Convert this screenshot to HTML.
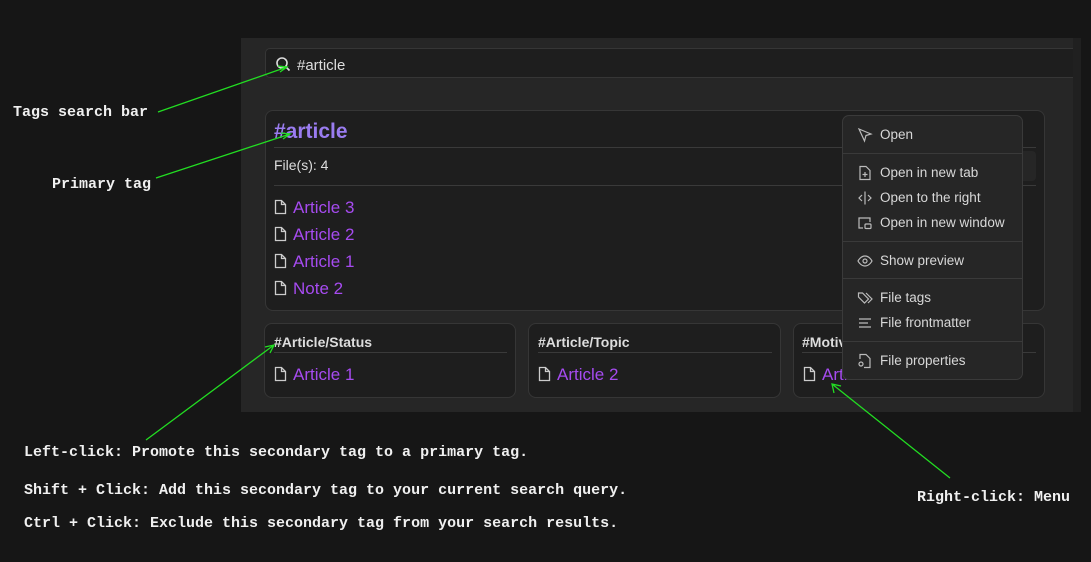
<!DOCTYPE html>
<html><head><style>
body{margin:0;width:1091px;height:562px;background:#161616;position:relative;overflow:hidden;font-family:"Liberation Sans",sans-serif}
.abs{position:absolute}
.panel{left:241px;top:38px;width:832px;height:374px;background:#262626}
.search{left:265px;top:48px;width:808px;height:30px;background:#1e1e1e;border:1px solid #363636;border-right:none;border-radius:5px 0 0 5px;box-sizing:border-box}
.card{background:#1e1e1e;border:1px solid #363636;border-radius:8px;box-sizing:border-box}
.mono{font-family:"Liberation Mono","DejaVu Sans Mono",monospace;font-weight:bold;color:#f0f0f0;font-size:15px;white-space:nowrap}
.link{color:#a64bf0;font-size:17px}
.fi{display:inline-block;vertical-align:-2px;margin-right:6px}
.rows div{height:27px;line-height:27px}
.menu{left:842px;top:115px;width:181px;height:265px;background:#262626;border:1px solid #3a3a3a;border-radius:7px;box-sizing:border-box}
.mi{position:absolute;left:14px;font-size:13.5px;color:#d8d8d8;white-space:nowrap}
.mi svg{position:absolute;left:0;top:0}
.mi span{position:absolute;left:23px;top:0px}
.sep{position:absolute;left:0;right:0;height:1px;background:#3a3a3a}
</style></head><body>
<div class="abs panel"></div>
<div class="abs" style="left:1073px;top:38px;width:8px;height:374px;background:#202020"></div>
<div class="abs search">
<svg class="abs" style="left:9px;top:7px" width="16" height="16" viewBox="0 0 16 16" fill="none" stroke="#ddd" stroke-width="1.6"><circle cx="7" cy="7" r="5"/><path d="M11 11l3.5 3.5"/></svg>
<div class="abs" style="left:31px;top:8px;color:#ddd;font-size:15px">#article</div>
</div>
<div class="abs card" style="left:265px;top:110px;width:780px;height:201px">
<div class="abs" style="left:8px;top:9px;font-size:21px;font-weight:bold;color:#9a7cf0">#article</div>
<div class="abs" style="left:8px;right:8px;top:36px;height:1px;background:#3a3a3a"></div>
<div class="abs" style="left:8px;top:46px;font-size:14px;color:#ddd">File(s): 4</div>
<div class="abs" style="left:8px;right:8px;top:74px;height:1px;background:#3a3a3a"></div>
<div class="abs rows" style="left:8px;top:83px">
<div><svg class="fi" width="13" height="16" viewBox="0 0 13 16" fill="none" stroke="#ccc" stroke-width="1.3"><path d="M1.5 1.5h6l4 4v9h-10z M7.5 1.5v4h4"/></svg><span class="link">Article 3</span></div>
<div><svg class="fi" width="13" height="16" viewBox="0 0 13 16" fill="none" stroke="#ccc" stroke-width="1.3"><path d="M1.5 1.5h6l4 4v9h-10z M7.5 1.5v4h4"/></svg><span class="link">Article 2</span></div>
<div><svg class="fi" width="13" height="16" viewBox="0 0 13 16" fill="none" stroke="#ccc" stroke-width="1.3"><path d="M1.5 1.5h6l4 4v9h-10z M7.5 1.5v4h4"/></svg><span class="link">Article 1</span></div>
<div><svg class="fi" width="13" height="16" viewBox="0 0 13 16" fill="none" stroke="#ccc" stroke-width="1.3"><path d="M1.5 1.5h6l4 4v9h-10z M7.5 1.5v4h4"/></svg><span class="link">Note 2</span></div>
</div>
<div class="abs" style="left:740px;top:40px;width:30px;height:30px;background:#262626;border-radius:4px"></div>
</div>
<div class="abs card" style="left:264px;top:323px;width:252px;height:75px">
<div class="abs" style="left:9px;top:10px;font-size:14px;font-weight:bold;color:#ddd">#Article/Status</div>
<div class="abs" style="left:9px;right:8px;top:28px;height:1px;background:#3a3a3a"></div>
<div class="abs" style="left:9px;top:41px"><svg class="fi" width="13" height="16" viewBox="0 0 13 16" fill="none" stroke="#ccc" stroke-width="1.3"><path d="M1.5 1.5h6l4 4v9h-10z M7.5 1.5v4h4"/></svg><span class="link">Article 1</span></div>
</div>
<div class="abs card" style="left:528px;top:323px;width:253px;height:75px">
<div class="abs" style="left:9px;top:10px;font-size:14px;font-weight:bold;color:#ddd">#Article/Topic</div>
<div class="abs" style="left:9px;right:8px;top:28px;height:1px;background:#3a3a3a"></div>
<div class="abs" style="left:9px;top:41px"><svg class="fi" width="13" height="16" viewBox="0 0 13 16" fill="none" stroke="#ccc" stroke-width="1.3"><path d="M1.5 1.5h6l4 4v9h-10z M7.5 1.5v4h4"/></svg><span class="link">Article 2</span></div>
</div>
<div class="abs card" style="left:793px;top:323px;width:252px;height:75px">
<div class="abs" style="left:8px;top:10px;font-size:14px;font-weight:bold;color:#ddd">#Motivation</div>
<div class="abs" style="left:8px;right:8px;top:28px;height:1px;background:#3a3a3a"></div>
<div class="abs" style="left:9px;top:41px"><svg class="fi" width="13" height="16" viewBox="0 0 13 16" fill="none" stroke="#ccc" stroke-width="1.3"><path d="M1.5 1.5h6l4 4v9h-10z M7.5 1.5v4h4"/></svg><span class="link">Article 3</span></div>
</div>
<div class="abs menu">
<div class="mi" style="top:11px"><svg width="16" height="16" viewBox="0 0 16 16" fill="none" stroke="#bbb" stroke-width="1.2"><path d="M2 2l12 5-5 1.5L7.5 14z"/></svg><span>Open</span></div>
<div class="sep" style="top:37px"></div>
<div class="mi" style="top:49px"><svg width="16" height="16" viewBox="0 0 16 16" fill="none" stroke="#bbb" stroke-width="1.2"><path d="M3 1.5h6l4 4v9H3z M8 7v5 M5.5 9.5h5"/></svg><span>Open in new tab</span></div>
<div class="mi" style="top:74px"><svg width="16" height="16" viewBox="0 0 16 16" fill="none" stroke="#bbb" stroke-width="1.2"><path d="M8 1.5v13 M5 5l-3 3 3 3 M11 5l3 3-3 3"/></svg><span>Open to the right</span></div>
<div class="mi" style="top:99px"><svg width="16" height="16" viewBox="0 0 16 16" fill="none" stroke="#bbb" stroke-width="1.2"><path d="M6 13H2V3h11v4"/><rect x="8" y="9" width="6" height="4.5" rx="1"/></svg><span>Open in new window</span></div>
<div class="sep" style="top:125px"></div>
<div class="mi" style="top:137px"><svg width="16" height="16" viewBox="0 0 16 16" fill="none" stroke="#bbb" stroke-width="1.2"><path d="M1 8s2.5-5 7-5 7 5 7 5-2.5 5-7 5-7-5-7-5z"/><circle cx="8" cy="8" r="2"/></svg><span>Show preview</span></div>
<div class="sep" style="top:162px"></div>
<div class="mi" style="top:174px"><svg width="16" height="16" viewBox="0 0 16 16" fill="none" stroke="#bbb" stroke-width="1.2"><path d="M1.5 3v4l6 6 4-4-6-6z M9 3l6 6-4 4"/></svg><span>File tags</span></div>
<div class="mi" style="top:199px"><svg width="16" height="16" viewBox="0 0 16 16" fill="none" stroke="#bbb" stroke-width="1.3"><path d="M2 4h12 M2 8h9 M2 12h12"/></svg><span>File frontmatter</span></div>
<div class="sep" style="top:225px"></div>
<div class="mi" style="top:237px"><svg width="16" height="16" viewBox="0 0 16 16" fill="none" stroke="#bbb" stroke-width="1.2"><path d="M3 6V1.5h6l4 4v9H7"/><circle cx="4" cy="11" r="2"/></svg><span>File properties</span></div>
</div>
<svg class="abs" style="left:0;top:0" width="1091" height="562" fill="none" stroke="#22dd22" stroke-width="1.3">
<path d="M158 112L287 67 M278 66l9 1-7 5"/>
<path d="M156 178L290 134 M281 133l9 1-7 5"/>
<path d="M146 440L274 345 M265 347l9-2-4 8"/>
<path d="M950 478L832 384 M834 393l-2-9 9 2"/>
</svg>
<div class="abs mono" style="left:13px;top:104px">Tags search bar</div>
<div class="abs mono" style="left:52px;top:176px">Primary tag</div>
<div class="abs mono" style="left:24px;top:444px">Left-click: Promote this secondary tag to a primary tag.</div>
<div class="abs mono" style="left:24px;top:482px">Shift + Click: Add this secondary tag to your current search query.</div>
<div class="abs mono" style="left:24px;top:515px">Ctrl + Click: Exclude this secondary tag from your search results.</div>
<div class="abs mono" style="left:917px;top:489px">Right-click: Menu</div>
</body></html>
